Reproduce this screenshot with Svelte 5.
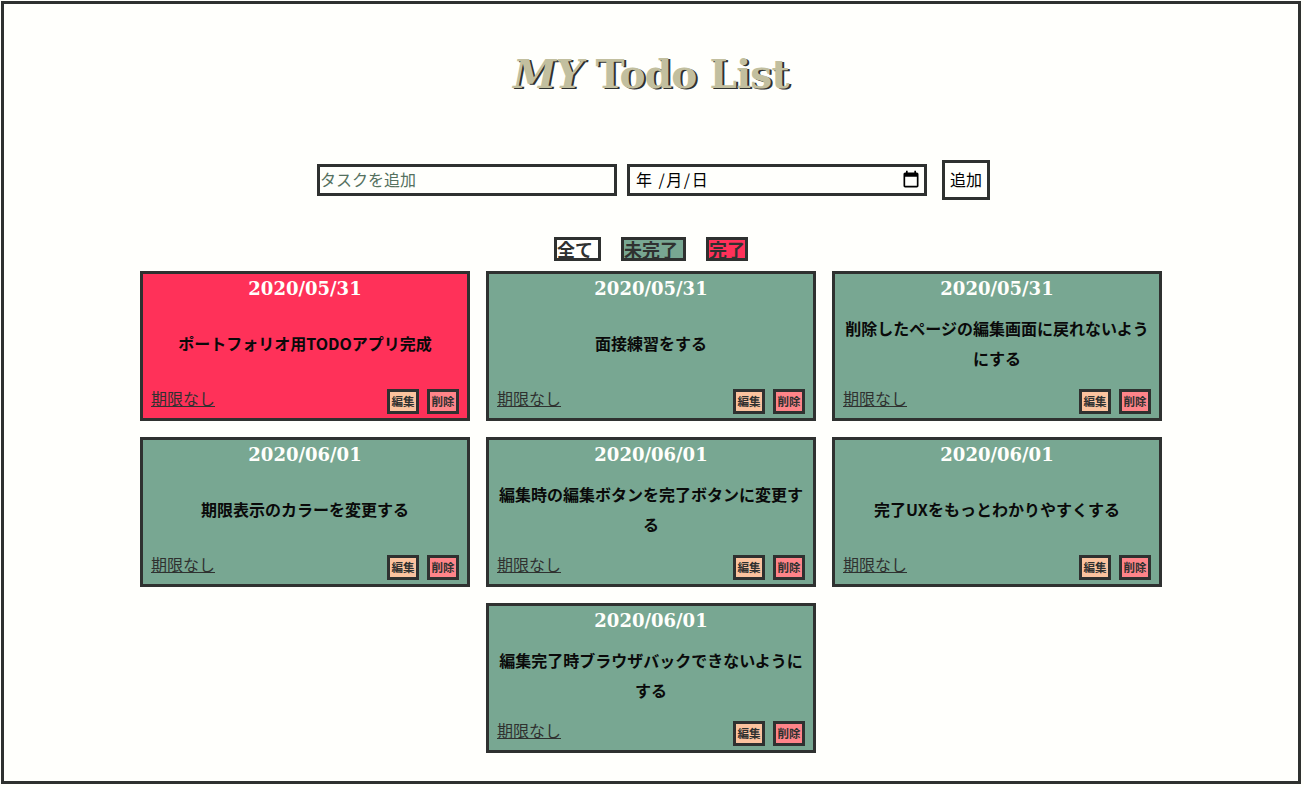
<script>
  const todos = [
    { date: '2020/05/31', text: 'ポートフォリオ用TODOアプリ完成', done: true },
    { date: '2020/05/31', text: '面接練習をする' },
    { date: '2020/05/31', text: '削除したページの編集画面に戻れないようにする' },
    { date: '2020/06/01', text: '期限表示のカラーを変更する' },
    { date: '2020/06/01', text: '編集時の編集ボタンを完了ボタンに変更する' },
    { date: '2020/06/01', text: '完了UXをもっとわかりやすくする' },
    { date: '2020/06/01', text: '編集完了時ブラウザバックできないようにする' },
  ];
</script>

<div class="page">
  <h1><em>MY</em> Todo List</h1>

  <form class="add-form">
    <input class="field" type="text" placeholder="タスクを追加" />
    <div class="field date-field">
      <span class="date-text">年 /月/日</span>
      <svg width="20" height="20" viewBox="0 0 24 24" aria-hidden="true">
        <path d="M19 3h-1V1h-2v2H8V1H6v2H5c-1.1 0-2 .9-2 2v14c0 1.1.9 2 2 2h14c1.1 0 2-.9 2-2V5c0-1.1-.9-2-2-2zm0 16H5V8h14v11z" fill="#000" />
      </svg>
    </div>
    <button class="add-btn" type="button">追加</button>
  </form>

  <div class="filters">
    <button type="button" class="filter all">全て</button>
    <button type="button" class="filter todo">未完了</button>
    <button type="button" class="filter done">完了</button>
  </div>

  <div class="cards">
    {#each todos as todo}
      <div class="card" class:is-done={todo.done}>
        <div class="card-date">{todo.date}</div>
        <div class="card-text">{todo.text}</div>
        <div class="card-foot">
          <span class="limit">期限なし</span>
          <div class="actions">
            <button type="button" class="small edit">編集</button>
            <button type="button" class="small del">削除</button>
          </div>
        </div>
      </div>
    {/each}
  </div>
</div>

<style>
  :global(body) {
    background: #fffffc;
    font-family: "Noto Sans CJK JP", "Noto Sans", sans-serif;
    color: #2f3130;
  }

  .page {
    box-sizing: border-box;
    width: 1300px;
    height: 783px;
    margin: 1px 0 0 1px;
    border: 3px solid #2f3130;
    display: flex;
    flex-direction: column;
    align-items: center;
  }

  h1 {
    margin: 45px 0 0;
    height: 50px;
    font-family: "DejaVu Serif", serif;
    font-size: 39px;
    font-weight: 700;
    line-height: 50px;
    letter-spacing: -0.7px;
    color: #c2bf9f;
    text-shadow: 2px 1px 0 #2f3130;
  }

  .add-form {
    margin-top: 61px;
    padding-left: 5px;
    display: flex;
    align-items: center;
    gap: 10px;
  }

  .field {
    box-sizing: border-box;
    width: 300px;
    height: 32px;
    margin: 0;
    padding: 0 0 3px;
    border: 3px solid #2f3130;
    border-radius: 0;
    background: #fffffc;
    font-family: inherit;
    font-size: 16px;
    color: #000;
    outline: none;
  }

  .field::placeholder {
    color: #55715f;
  }

  .date-field {
    display: flex;
    align-items: center;
    justify-content: space-between;
    padding: 0 3px 0 6px;
  }

  .date-text {
    margin-bottom: 3px;
    letter-spacing: 1.5px;
  }

  .add-btn {
    box-sizing: border-box;
    width: 48px;
    height: 40px;
    margin-left: 5px;
    padding: 0 0 3px;
    border: 3px solid #2f3130;
    background: #fffffc;
    font-family: inherit;
    font-size: 16px;
    color: #000;
  }

  .filters {
    margin-top: 37px;
    display: flex;
    gap: 20px;
  }

  .filter {
    box-sizing: border-box;
    height: 24px;
    padding: 0 0 2px;
    border: 3px solid #2f3130;
    font-family: inherit;
    font-size: 18px;
    font-weight: 700;
    line-height: 18px;
    text-align: left;
    color: #2f3130;
  }

  .filter.all { width: 47px; background: #fffffc; }
  .filter.todo { width: 65px; background: #78a792; }
  .filter.done { width: 42px; background: #ff3159; }

  .cards {
    width: 1040px;
    margin-top: 2px;
    display: flex;
    flex-wrap: wrap;
    justify-content: center;
  }

  .card {
    box-sizing: border-box;
    width: 330px;
    height: 150px;
    margin: 8px;
    padding: 0 8px 3px;
    border: 3px solid #2f3130;
    background: #78a792;
    display: flex;
    flex-direction: column;
  }

  .card.is-done {
    background: #ff3159;
  }

  .card-date {
    margin-top: 2px;
    height: 26px;
    font-family: "DejaVu Serif", serif;
    font-size: 18px;
    font-weight: 700;
    line-height: 26px;
    text-align: center;
    color: #fffffc;
  }

  .card-text {
    flex: 1;
    display: flex;
    align-items: center;
    justify-content: center;
    padding-bottom: 5px;
    font-size: 16px;
    font-weight: 700;
    line-height: 30px;
    text-align: center;
    color: #0a0a0a;
  }

  .card-foot {
    height: 26px;
    display: flex;
    align-items: flex-start;
    justify-content: space-between;
  }

  .limit {
    font-size: 16px;
    line-height: 18px;
    text-decoration: underline;
    color: #2f3130;
  }

  .actions {
    display: flex;
    gap: 8px;
  }

  .small {
    box-sizing: border-box;
    width: 32px;
    height: 25px;
    padding: 0 0 1px;
    border: 3px solid #2f3130;
    font-family: inherit;
    font-size: 11.5px;
    font-weight: 700;
    color: #2f3130;
  }

  .small.edit { background: #fbc39f; }
  .small.del { background: #ff8489; }
</style>
